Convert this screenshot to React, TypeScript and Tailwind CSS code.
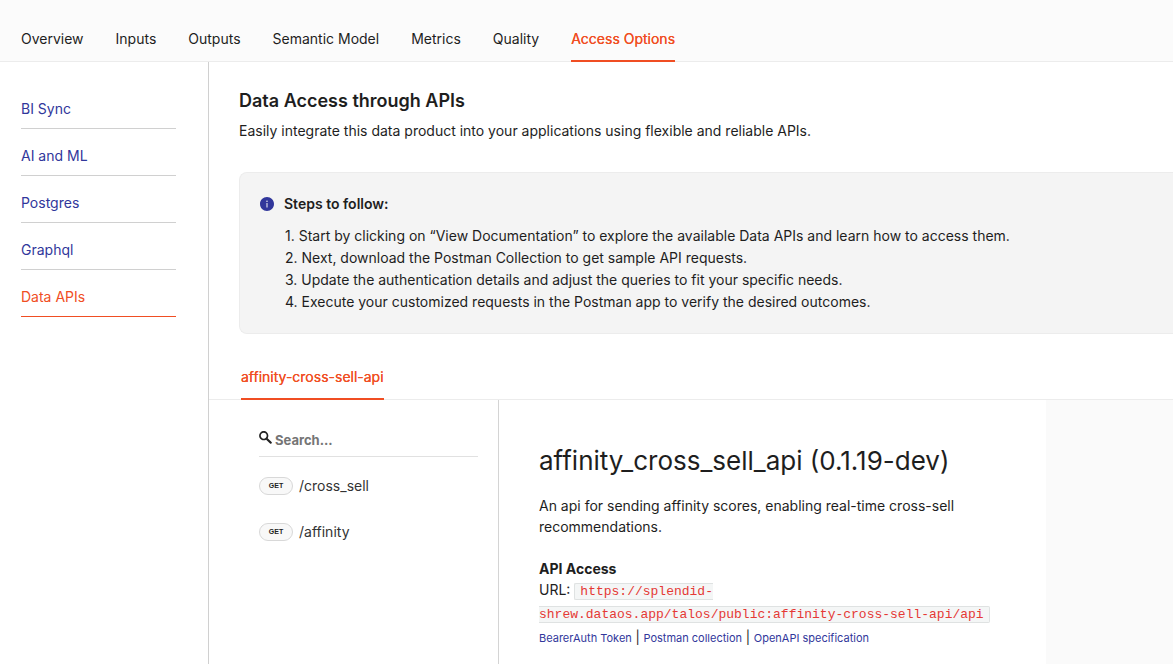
import React from "react";

const tabs = ["Overview", "Inputs", "Outputs", "Semantic Model", "Metrics", "Quality", "Access Options"];
const sections = ["BI Sync", "AI and ML", "Postgres", "Graphql", "Data APIs"];
const steps = [
  "Start by clicking on “View Documentation” to explore the available Data APIs and learn how to access them.",
  "Next, download the Postman Collection to get sample API requests.",
  "Update the authentication details and adjust the queries to fit your specific needs.",
  "Execute your customized requests in the Postman app to verify the desired outcomes.",
];
const endpoints = ["/cross_sell", "/affinity"];

function InfoIcon() {
  return (
    <svg viewBox="64 64 896 896" className="size-3.5 shrink-0" fill="#31379b" aria-hidden="true">
      <path d="M512 64C264.600 64 64 264.600 64 512s200.600 448 448 448 448-200.600 448-448S759.400 64 512 64zm32 664c0 4.400-3.600 8-8 8h-48c-4.400 0-8-3.600-8-8V456c0-4.400 3.600-8 8-8h48c4.400 0 8 3.600 8 8v272zm-32-344a48.010 48.010 0 0 1 0-96 48.010 48.010 0 0 1 0 96z" />
    </svg>
  );
}

function SearchIcon() {
  return (
    <svg viewBox="0 0 1000 1000" className="size-[13px] shrink-0" fill="#222" aria-hidden="true">
      <path d="M968.2,849.4L667.3,549c83.9-136.5,66.7-317.4-51.7-435.6C477.1-25,252.5-25,113.9,113.4c-138.5,138.3-138.5,362.6,0,501C219.2,730.1,413.2,743,547.6,666.5l301.9,301.4c43.6,43.6,76.9,14.9,104.2-12.4C981,928.3,1011.8,893,968.2,849.4z M524.5,522c-88.9,88.7-233,88.7-321.8,0c-88.9-88.7-88.9-232.6,0-321.3c88.9-88.7,233-88.7,321.8,0C613.4,289.4,613.4,433.3,524.5,522z" />
    </svg>
  );
}

function TopTabs() {
  return (
    <nav className="flex h-[62px] items-end gap-8 border-b border-[#ececec] bg-[#fbfbfb] px-[21px]">
      {tabs.map((tab) => (
        <a
          key={tab}
          href="#"
          className={
            tab === "Access Options"
              ? "-mb-px border-b-2 border-[#f04e23] pb-2.5 leading-[22px] text-[#f04e23] [text-shadow:0_0_0.25px_currentcolor]"
              : "-mb-px border-b-2 border-transparent pb-2.5 leading-[22px]"
          }
        >
          {tab}
        </a>
      ))}
    </nav>
  );
}

function SideNav() {
  return (
    <nav className="flex w-[209px] shrink-0 flex-col gap-4 border-r border-[#d0d0d0] pt-9 pr-8 pl-[21px]">
      {sections.map((section) => (
        <a
          key={section}
          href="#"
          className={
            section === "Data APIs"
              ? "border-b border-[#f04e23] pb-2 leading-[22px] text-[#f04e23]"
              : "border-b border-[#d0d0d0] pb-2 leading-[22px] text-[#31379b]"
          }
        >
          {section}
        </a>
      ))}
    </nav>
  );
}

function StepsCard() {
  return (
    <section className="mt-[30px] ml-[30px] flex gap-2.5 rounded-l-lg border-y border-l border-[#ececec] bg-[#f4f4f4] p-5">
      <div className="flex h-[22px] items-center">
        <InfoIcon />
      </div>
      <div>
        <h2 className="leading-[22px] font-semibold">Steps to follow:</h2>
        <ol className="mt-2.5 px-px leading-[22px]">
          {steps.map((step, i) => (
            <li key={step}>{`${i + 1}. ${step}`}</li>
          ))}
        </ol>
      </div>
    </section>
  );
}

function EndpointNav() {
  return (
    <aside className="w-[290px] shrink-0 border-r border-[#d4d4d4] pt-[29px] pr-5 pl-[50px]">
      <label className="flex gap-[3px] border-b border-[#e1e1e1] pt-0.5 pb-[7px]">
        <SearchIcon />
        <input
          type="text"
          aria-label="Search"
          placeholder="Search..."
          className="h-[18px] min-w-0 flex-1 bg-transparent text-[13px] font-bold outline-none placeholder:text-[#757575]"
        />
      </label>
      <ul className="pt-1.5">
        {endpoints.map((path) => (
          <li key={path}>
            <a href="#" className="flex h-[46px] items-center gap-1.5 text-[#333]">
              <span className="flex h-[18px] w-[34px] items-center justify-center rounded-full border border-[#d8d8d8] bg-[#f8f8f8] font-['Liberation_Sans',sans-serif] text-[7px] font-bold text-[#222]">
                GET
              </span>
              {path}
            </a>
          </li>
        ))}
      </ul>
    </aside>
  );
}

function ApiDocs() {
  return (
    <article className="px-10 pt-11">
      <h1 className="text-[26px] leading-[34px]">affinity_cross_sell_api (0.1.19-dev)</h1>
      <p className="mt-[17px] leading-[21px]">
        An api for sending affinity scores, enabling real-time cross-sell recommendations.
      </p>
      <h2 className="mt-[21px] leading-[21px] font-bold">API Access</h2>
      <p className="leading-[21px]">
        URL:{" "}
        <code className="rounded-xs border border-[#dfe2e2] bg-[#f4f6f6] px-[5px] font-['Liberation_Mono',monospace] text-[13px] break-words text-[#e53935]">
          https://splendid-shrew.dataos.app/talos/public:affinity-cross-sell-api/api
        </code>
      </p>
      <p className="text-[13px] leading-6">
        <a href="#" className="text-[11px] text-[#31379b]">BearerAuth Token</a>
        {" | "}
        <a href="#" className="text-[11px] text-[#31379b]">Postman collection</a>
        {" | "}
        <a href="#" className="text-[11px] text-[#31379b]">OpenAPI specification</a>
      </p>
    </article>
  );
}

export default function App() {
  return (
    <div className="flex min-h-screen flex-col bg-white font-['Inter',sans-serif] text-sm text-[#1e1e1e]">
      <TopTabs />
      <div className="flex flex-1">
        <SideNav />
        <main className="flex min-w-0 flex-1 flex-col pt-[25px]">
          <header className="px-[30px]">
            <h1 className="text-lg leading-7 font-semibold">Data Access through APIs</h1>
            <p className="mt-[5px] leading-[22px]">
              Easily integrate this data product into your applications using flexible and reliable APIs.
            </p>
          </header>
          <StepsCard />
          <div className="flex border-b border-[#ececec] px-8 pt-8">
            <a
              href="#"
              className="-mb-px border-b-2 border-[#f04e23] pb-2.5 leading-[22px] text-[#f04e23] [text-shadow:0_0_0.25px_currentcolor]"
            >
              affinity-cross-sell-api
            </a>
          </div>
          <div className="flex flex-1">
            <EndpointNav />
            <div className="min-w-0 flex-[547]">
              <ApiDocs />
            </div>
            <div className="flex-[127] bg-[#fafafa]" />
          </div>
        </main>
      </div>
    </div>
  );
}
